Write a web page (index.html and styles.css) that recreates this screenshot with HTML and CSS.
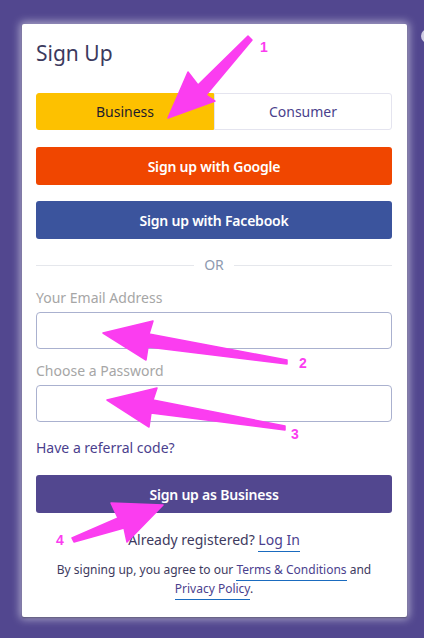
FILE: index.html
```html
<!DOCTYPE html>
<html lang="en">
<head>
<meta charset="utf-8">
<title>Sign Up</title>
<link rel="stylesheet" href="styles.css">
</head>
<body>
<div class="page">
  <div class="card">
    <h1 class="title">Sign Up</h1>
    <div class="toggle">
      <button class="toggle-btn active">Business</button>
      <button class="toggle-btn">Consumer</button>
    </div>
    <button class="btn btn-google">Sign up with Google</button>
    <button class="btn btn-facebook">Sign up with Facebook</button>
    <div class="divider"><span class="divider-line"></span><span class="divider-text">OR</span><span class="divider-line"></span></div>
    <label class="field-label">Your Email Address</label>
    <input class="field-input" type="email">
    <label class="field-label field-label-second">Choose a Password</label>
    <input class="field-input" type="password">
    <a class="referral">Have a referral code?</a>
    <button class="btn btn-primary">Sign up as Business</button>
    <p class="already">Already registered? <a class="ulink">Log In</a></p>
    <p class="terms">By signing up, you agree to our <a class="ulink">Terms &amp; Conditions</a> and <a class="ulink">Privacy Policy</a>.</p>
  </div>
  <span class="edge-dot"></span>
  <svg class="annotations" width="424" height="638" viewBox="0 0 424 638">
    <g class="arrow">
      <polygon points="248,36 252,40 206,95 215,101 168,118 188,72 198,85"/>
      <polygon points="287,360 287,364 148,347 146,360 103,333 153,321 149,334"/>
      <polygon points="285,426 285,430 151,413 149,427 107,400 157,388 153,400"/>
      <polygon points="72,538 74,542 124,528 127,542 163,505 111,503 118,518"/>
    </g>
    <g class="arrow-num">
      <text x="264" y="52">1</text>
      <text x="303" y="368">2</text>
      <text x="295" y="439">3</text>
      <text x="60" y="545">4</text>
    </g>
  </svg>
</div>
</body>
</html>
```
FILE: styles.css
```css
* { box-sizing: border-box; }
html, body { margin: 0; padding: 0; }
body {
  background: #52478f;
  font-family: "Noto Sans", "Open Sans", sans-serif;
  width: 424px;
  height: 638px;
  overflow: hidden;
}
.page {
  position: relative;
  width: 424px;
  height: 638px;
  padding: 24px 0 0 22px;
}
.card {
  width: 385px;
  height: 593px;
  background: #ffffff;
  border-radius: 2px;
  padding: 14px 15px 0 14px;
  display: flex;
  flex-direction: column;
  box-shadow: 0 1px 2px rgba(0,0,0,0.35), 0 0 9px 2px rgba(255,255,255,0.55);
}
.title {
  margin: 0;
  font-size: 21px;
  font-weight: 400;
  line-height: 30px;
  color: #3c3a5e;
}
.toggle {
  display: flex;
  margin-top: 25px;
  height: 37px;
}
.toggle-btn {
  flex: 1;
  font-family: inherit;
  font-size: 14px;
  border: 1px solid #e4e4ef;
  background: #fff;
  color: #4a3f8c;
  border-radius: 0 3px 3px 0;
  padding: 0;
}
.toggle-btn.active {
  background: #fdc100;
  border-color: #fdc100;
  color: #1e1c2c;
  border-radius: 3px 0 0 3px;
}
.btn {
  height: 38px;
  border: 0;
  border-radius: 3px;
  color: #fff;
  font-family: inherit;
  font-size: 14px;
  font-weight: 600;
  letter-spacing: -0.2px;
  padding: 0;
}
.btn-google { background: #f04600; margin-top: 17px; }
.btn-facebook { background: #3b549d; margin-top: 16px; }
.btn-primary { background: #52478f; margin-top: 17px; }
.divider {
  display: flex;
  align-items: center;
  height: 20px;
  margin-top: 16px;
}
.divider-line { flex: 1; height: 1px; background: #e5e7ec; }
.divider-text {
  padding: 0 10px;
  font-size: 14px;
  color: #8e9ab0;
  line-height: 20px;
}
.field-label {
  font-size: 14px;
  line-height: 20px;
  color: #a6a6a6;
  margin-top: 13px;
}
.field-label-second { margin-top: 12px; }
.field-input {
  height: 37px;
  margin-top: 4px;
  border: 1px solid #aab1cf;
  border-radius: 4px;
  background: #fff;
}
.referral {
  font-size: 14px;
  line-height: 20px;
  color: #4b3f8e;
  margin-top: 16px;
}
.already {
  margin: 17px 0 0;
  text-align: center;
  font-size: 14px;
  line-height: 20px;
  color: #3e3a5e;
}
.ulink {
  color: #4b3f8e;
  border-bottom: 1px solid #1a6bbf;
  padding-bottom: 2px;
}
.terms {
  margin: 10px 0 0;
  text-align: center;
  font-size: 12px;
  line-height: 19px;
  color: #3e3a5e;
}
.edge-dot {
  position: absolute;
  left: 421px;
  top: 29px;
  width: 14px;
  height: 14px;
  border-radius: 50%;
  background: #cfcbe2;
}
.annotations {
  position: absolute;
  left: 0;
  top: 0;
  pointer-events: none;
}
.arrow polygon {
  fill: #fb3df0;
  stroke: #fb3df0;
  stroke-width: 1.5;
  stroke-linejoin: round;
}
.arrow-num text {
  fill: #fb3df0;
  font-family: "Liberation Sans", Arial, sans-serif;
  font-weight: 700;
  font-size: 14px;
  text-anchor: middle;
}
```
